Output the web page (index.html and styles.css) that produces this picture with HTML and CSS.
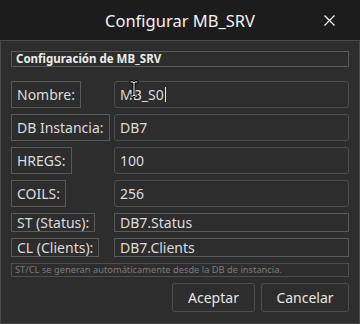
FILE: index.html
```html
<!DOCTYPE html>
<html lang="es">
<head>
    <meta charset="UTF-8">
    <meta name="viewport" content="width=device-width, initial-scale=1.0">
    <title>Configurar MB_SRV</title>
    <link rel="stylesheet" href="styles.css">
</head>
<body>
    <div class="window">
        <div class="titlebar">
            <span class="title">Configurar MB_SRV</span>
            <svg class="close" width="11" height="11" viewBox="0 0 11 11">
                <path d="M0.5 0.5 L10.5 10.5 M10.5 0.5 L0.5 10.5" stroke="#ffffff" stroke-width="1.2"/>
            </svg>
        </div>

        <div class="content">
            <div class="group-title">Configuración de MB_SRV</div>

            <div class="form">
                <div class="label tall">Nombre:</div>
                <div class="field tall edit">
                    <span class="value">MB_S0</span><span class="caret"></span>
                    <!-- mouse pointer over the field -->
                    <svg class="ibeam" width="10" height="18" viewBox="0 0 10 18">
                        <path d="M1 1 H4 L5 2 L6 1 H9 V3 H6 V15 H9 V17 H6 L5 16 L4 17 H1 V15 H4 V3 H1 Z" fill="#ffffff" stroke="#000000" stroke-width="1"/>
                    </svg>
                </div>

                <div class="label tall">DB Instancia:</div>
                <div class="field tall edit"><span class="value">DB7</span></div>

                <div class="label tall">HREGS:</div>
                <div class="field tall edit"><span class="value">100</span></div>

                <div class="label tall">COILS:</div>
                <div class="field tall edit"><span class="value">256</span></div>

                <div class="label short">ST (Status):</div>
                <div class="field short"><span class="value">DB7.Status</span></div>

                <div class="label short">CL (Clients):</div>
                <div class="field short"><span class="value">DB7.Clients</span></div>
            </div>

            <div class="hint">ST/CL se generan automáticamente desde la DB de instancia.</div>

            <div class="buttons">
                <button class="btn ok">Aceptar</button>
                <button class="btn">Cancelar</button>
            </div>
        </div>
    </div>
</body>
</html>
```

FILE: styles.css
```css
body {
    margin: 0;
    background: #2d2d2d;
    font-family: "Noto Sans", "DejaVu Sans", sans-serif;
    color: #dcdcdc;
}
.window {
    width: 360px;
    height: 324px;
    box-sizing: border-box;
    display: flex;
    flex-direction: column;
}
.titlebar {
    height: 40px;
    flex: none;
    background: #1c1c1c;
    display: flex;
    align-items: center;
    justify-content: center;
    position: relative;
}
.title {
    font-size: 16.5px;
    color: #f2f2f2;
}
.close {
    position: absolute;
    right: 25px;
    top: 15px;
}
.content {
    flex: 1;
    background: #2d2d2d;
    border: 1px solid #4b4b4b;
    padding: 10px 10px 9px 10px;
    display: flex;
    flex-direction: column;
    gap: 6px;
}
.group-title {
    height: 16px;
    box-sizing: border-box;
    border: 1px solid #5a5a5a;
    font-size: 11.5px;
    font-weight: bold;
    line-height: 13px;
    padding-left: 4px;
    color: #ececec;
    margin-bottom: 8px;
}
.form {
    display: grid;
    grid-template-columns: 103px 1fr;
    row-gap: 6px;
}
.label {
    justify-self: start;
    box-sizing: border-box;
    border: 1px solid #5a5a5a;
    padding: 0 5px;
    font-size: 14px;
    display: flex;
    align-items: center;
}
.field {
    box-sizing: border-box;
    border: 1px solid #5a5a5a;
    padding: 0 5px;
    font-size: 14px;
    display: flex;
    align-items: center;
    position: relative;
}
.tall {
    height: 27px;
}
.short {
    height: 19px;
}
.edit {
    border-radius: 3px;
    border-color: #4e4e4e;
}
.caret {
    display: inline-block;
    width: 1px;
    height: 15px;
    background: #e8e8e8;
    margin-left: 1px;
}
.ibeam {
    position: absolute;
    left: 14px;
    top: -2px;
}
.hint {
    height: 14px;
    box-sizing: border-box;
    border: 1px solid #4e4e4e;
    font-size: 9.3px;
    line-height: 12px;
    padding-left: 3px;
    color: #7b7b7b;
}
.buttons {
    display: flex;
    justify-content: flex-end;
    gap: 6px;
}
.btn {
    height: 29px;
    box-sizing: border-box;
    background: #2d2d2d;
    border: 1px solid #4e4e4e;
    border-radius: 3px;
    color: #e6e6e6;
    font-family: inherit;
    font-size: 14px;
    padding: 0;
}
.ok {
    width: 83px;
}
.btn:last-child {
    width: 88px;
}
```
